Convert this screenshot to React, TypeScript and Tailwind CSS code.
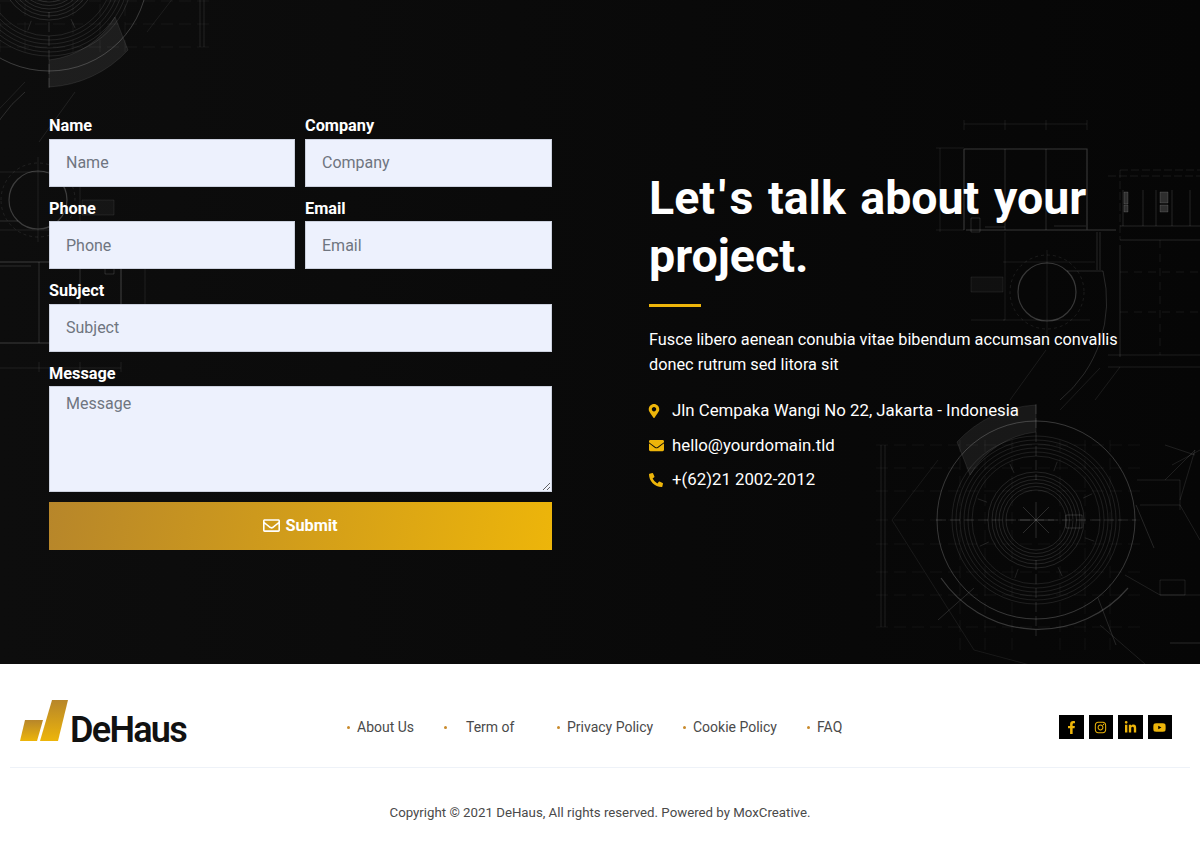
import { FaFacebookF, FaInstagram, FaLinkedinIn, FaYoutube, FaMapMarkerAlt, FaEnvelope, FaPhoneAlt, FaRegEnvelope } from 'react-icons/fa';

const font = 'font-["Roboto",sans-serif]';

function Plan() {
  const inner = [30, 33.5, 37, 40.5, 44, 48];
  const outer = [64, 68, 72, 76, 80, 84];
  const spokes = [20, 65, 110, 155, 200, 245, 290, 335];
  return (
    <g fill="none" stroke="#fff" strokeWidth="0.7">
      {/* round building */}
      <g transform="translate(1036 520)">
        {inner.map((r) => (
          <circle key={r} r={r} strokeOpacity="0.17" />
        ))}
        {outer.map((r) => (
          <circle key={r} r={r} strokeOpacity="0.14" />
        ))}
        <circle r="99" strokeOpacity="0.2" strokeWidth="1" />
        <path d="M0 -116V-40M0 40V116M-100 0H100" strokeOpacity="0.2" strokeDasharray="10 4" />
        <path d="M-18 0H18M0 -18V18M-13 -13L13 13M-13 13L13 -13" strokeOpacity="0.22" />
        {spokes.map((a) => (
          <path key={a} d="M52 0H62" transform={`rotate(${a})`} strokeOpacity="0.14" />
        ))}
        <path d="M0 -115A115 115 0 0 0 -79 -78L-66 -45A88 88 0 0 1 0 -88Z" fill="#fff" fillOpacity="0.07" strokeOpacity="0.12" />
        <path d="M-62 68L-98 100M62 78L80 125M100 -15L118 28" strokeOpacity="0.18" />
        <path d="M-144 0L-62 130L50 160" strokeOpacity="0.1" />
        <path d="M-98 -60L-144 0" strokeOpacity="0.1" />
        <path d="M-95 58A118 118 0 0 0 92 68" strokeOpacity="0.2" strokeWidth="1.2" />
        <path d="M30 -5H46V8H30Z" strokeOpacity="0.22" />
      </g>
      {/* dimension grid under the round building */}
      <g strokeOpacity="0.08" strokeDasharray="12 6">
        <path d="M876 445H1140M876 468H1140M876 491H1140M876 520H1140M876 544H1140M876 572H1140M876 595H1140M876 627H1140" />
        <path d="M960 440V650M985 440V650M1012 440V650M1060 440V650M1085 440V650M1110 440V650" />
      </g>
      <path d="M881 445V627M885 445V627" strokeOpacity="0.14" />
      {/* floor plan, upper block */}
      <g strokeOpacity="0.2">
        <path d="M964 149H1087V230M964 149V230M966 230H1116" strokeWidth="1.1" />
        <path d="M1005 149V230M1046 149V230" />
        <path d="M964 124H1087M964 120V130M1005 120V130M1046 120V130M1087 120V130" strokeOpacity="0.12" />
        <path d="M940 148V232M936 148H964M936 230H964" strokeOpacity="0.12" />
        <path d="M971 218H980V232H971ZM1054 226H1086M985 227H1005" strokeOpacity="0.18" />
      </g>
      {/* floor plan, right block */}
      <g strokeOpacity="0.18">
        <path d="M1120 170H1200M1108 176H1200M1120 170V240" strokeDasharray="8 3" strokeOpacity="0.12" />
        <path d="M1123 190V226M1143 190V226M1156 190V226M1172 190V226M1190 190V226" />
        <path d="M1120 226H1200M1120 240H1200M1120 245V357" />
        <path d="M1124 192H1128V204H1124ZM1124 205H1128V212H1124ZM1160 192H1168V203H1160ZM1160 205H1168V212H1160Z" fill="#fff" fillOpacity="0.16" />
        <path d="M1120 272H1200M1120 312H1200M1160 240V355" strokeDasharray="8 6" strokeOpacity="0.1" />
        <path d="M1108 355H1200M1108 367H1200" strokeOpacity="0.14" />
      </g>
      {/* small round room */}
      <g strokeOpacity="0.2">
        <circle cx="1047" cy="292" r="29" strokeWidth="1.2" />
        <circle cx="1047" cy="292" r="37" strokeDasharray="3 3" strokeOpacity="0.12" />
        <path d="M1005 232V320H971M1003 262H1095M1003 320H1090M1047 250V335" strokeOpacity="0.12" />
        <path d="M1067 271H1103A128 128 0 0 1 1060 400" />
        <path d="M971 277H1003V292H971Z" fill="#fff" fillOpacity="0.04" strokeOpacity="0.1" />
        <path d="M1097 232V270M1100 232V270" />
        <path d="M1046 350L1010 400M1100 368L1060 410M1120 367L1095 400" strokeOpacity="0.12" />
      </g>
      {/* stair and annex at the far right */}
      <g strokeOpacity="0.14">
        <path d="M1165 445L1195 455M1165 480L1195 450M1180 500L1195 450M1172 465L1200 450" />
        <path d="M1137 480H1180V510M1140 505H1180L1200 540" />
        <path d="M1160 595H1200M1125 575L1160 595M1100 625L1145 664" />
        <path d="M1160 580H1185V595H1160Z" />
        <path d="M1170 643H1200" strokeWidth="1" />
      </g>
    </g>
  );
}

export default function App() {
  const inputCls = `h-12 w-full bg-[#edf1fd] px-[16px] text-base text-[#212529] border border-[#9ca3af]/40 placeholder:text-[#6f7580] outline-none ${font}`;
  const labelCls = 'block text-[16.3px] font-bold leading-[24.5px] text-white';
  const links = [
    { label: 'About Us', dot: 'mr-[7px]', cls: 'w-[97px]' },
    { label: 'Term of', dot: 'mr-[19px]', cls: 'w-[113px]' },
    { label: 'Privacy Policy', dot: 'mr-[7px]', cls: 'w-[126px]' },
    { label: 'Cookie Policy', dot: 'mr-[7px]', cls: 'w-[124px]' },
    { label: 'FAQ', dot: 'mr-[7px]', cls: '' },
  ];
  const socials = [FaFacebookF, FaInstagram, FaLinkedinIn, FaYoutube];

  return (
    <div className={`min-h-[868px] w-[1200px] overflow-hidden bg-white ${font}`}>
      <section className="relative flex h-[664px] items-center bg-[linear-gradient(90deg,#0d0d0d,#060606)] text-white">
        {/* blueprint background, a second copy turned half way round sits top left */}
        <svg className="pointer-events-none absolute inset-0" width="1200" height="664" viewBox="0 0 1200 664">
          <Plan />
          <g transform="rotate(180 542.5 246)">
            <Plan />
          </g>
        </svg>

        <div className="relative flex w-full items-center pl-[49px] pr-[82px]">
          <form className="flex w-[503px] shrink-0 flex-col gap-[10px]">
            <div className="grid grid-cols-[246px_1fr] gap-x-[10px]">
              <div>
                <label className={labelCls}>Name</label>
                <input className={inputCls} placeholder="Name" />
              </div>
              <div>
                <label className={labelCls}>Company</label>
                <input className={inputCls} placeholder="Company" />
              </div>
            </div>
            <div className="grid grid-cols-[246px_1fr] gap-x-[10px]">
              <div>
                <label className={labelCls}>Phone</label>
                <input className={inputCls} placeholder="Phone" />
              </div>
              <div>
                <label className={labelCls}>Email</label>
                <input className={inputCls} placeholder="Email" />
              </div>
            </div>
            <div>
              <label className={labelCls}>Subject</label>
              <input className={inputCls} placeholder="Subject" />
            </div>
            <div>
              <label className={labelCls}>Message</label>
              <textarea
                className={`block h-[105.5px] w-full bg-[#edf1fd] px-[16px] py-[5px] text-base text-[#212529] border border-[#9ca3af]/40 placeholder:text-[#6f7580] outline-none ${font}`}
                placeholder="Message"
              />
            </div>
            <button
              type="button"
              className="flex h-12 w-full items-center justify-center gap-[5px] bg-[linear-gradient(100deg,#b7862a,#edb50a)] text-[16.3px] font-bold text-white"
            >
              <FaRegEnvelope size={17} />
              Submit
            </button>
          </form>

          <div className="ml-[97px] flex-1 -translate-y-[1px]">
            <h2 className="text-[46.5px] font-bold leading-[57.5px] [word-spacing:3px]">
              Let<span className="mx-[3.5px] inline-block">'</span>s talk about your
              <br />
              project.
            </h2>
            <div className="mb-[20px] mt-[19px] h-[3px] w-[52px] bg-[#edb50a]" />
            <p className="text-[16.3px] leading-[25px]">
              Fusce libero aenean conubia vitae bibendum accumsan convallis donec rutrum sed litora sit
            </p>
            <ul className="mt-[21px] flex flex-col gap-[10px] text-[16.8px] leading-[24.5px]">
              <li className="flex items-center">
                <span className="flex w-[23px] text-[#edb50a]">
                  <FaMapMarkerAlt size={14} className="-ml-[2px]" />
                </span>
                Jln Cempaka Wangi No 22, Jakarta - Indonesia
              </li>
              <li className="flex items-center">
                <span className="flex w-[23px] text-[#edb50a]">
                  <FaEnvelope size={15} />
                </span>
                hello@yourdomain.tld
              </li>
              <li className="flex items-center">
                <span className="flex w-[23px] text-[#edb50a]">
                  <FaPhoneAlt size={14} />
                </span>
                +(62)21 2002-2012
              </li>
            </ul>
          </div>
        </div>
      </section>

      <footer className="px-[10px]">
        <div className="flex h-[104px] items-center border-b border-[#eef2f8] pl-[10px] pr-[18px] pt-[23px]">
          <div className="-mt-[14px] flex w-[327px] shrink-0 items-end">
            <svg width="50" height="41" viewBox="0 0 50 41" className="shrink-0">
              <defs>
                <linearGradient id="logoGold" x1="0" y1="0" x2="0" y2="1">
                  <stop offset="0" stopColor="#b7862a" />
                  <stop offset="1" stopColor="#edb50a" />
                </linearGradient>
              </defs>
              <path d="M5 20H23L17 41H0Z" fill="url(#logoGold)" />
              <path d="M32 0H48L38 41H20Z" fill="url(#logoGold)" />
            </svg>
            <span className="-mb-[10px] text-[36px] font-semibold leading-[42px] tracking-[-1.7px] text-[#111]">
              DeHaus
            </span>
          </div>
          <nav className="flex flex-1 items-center text-sm text-[#4a4a4a]">
            {links.map((l) => (
              <a key={l.label} className={`flex items-center ${l.cls}`}>
                <span className={`h-[3px] w-[3px] rounded-full bg-[#c98a2b] ${l.dot}`} />
                {l.label}
              </a>
            ))}
          </nav>
          <div className="flex gap-[5px]">
            {socials.map((Icon, i) => (
              <a key={i} className="flex h-[24.5px] w-[24.5px] items-center justify-center bg-black text-[#edb50a]">
                <Icon size={13} />
              </a>
            ))}
          </div>
        </div>
        <p className="pt-[35px] text-center text-[13.25px] leading-[20px] text-[#4a4a4a]">
          Copyright © 2021 DeHaus, All rights reserved. Powered by MoxCreative.
        </p>
      </footer>
    </div>
  );
}
